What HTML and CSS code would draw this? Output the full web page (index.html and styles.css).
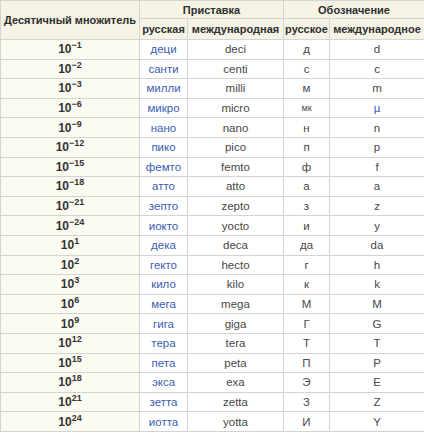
FILE: index.html
```html
<!DOCTYPE html>
<html>
<head>
    <meta charset="utf-8">
    <title>Приставки СИ</title>
    <link rel="stylesheet" href="styles.css">
</head>
<body>
    <table class="prefixes">
        <colgroup>
            <col class="c-mult">
            <col class="c-ru">
            <col class="c-int">
            <col class="c-sru">
            <col class="c-sint">
        </colgroup>
        <thead>
            <tr class="head-top">
                <th rowspan="2">Десятичный множитель</th>
                <th colspan="2">Приставка</th>
                <th colspan="2">Обозначение</th>
            </tr>
            <tr class="head-sub">
                <th>русская</th>
                <th>международная</th>
                <th>русское</th>
                <th>международное</th>
            </tr>
        </thead>
        <tbody>
            <tr><td class="mult">10<sup>−1</sup></td><td class="link">деци</td><td>deci</td><td>д</td><td>d</td></tr>
            <tr><td class="mult">10<sup>−2</sup></td><td class="link">санти</td><td>centi</td><td>с</td><td>c</td></tr>
            <tr><td class="mult">10<sup>−3</sup></td><td class="link">милли</td><td>milli</td><td>м</td><td>m</td></tr>
            <tr><td class="mult">10<sup>−6</sup></td><td class="link">микро</td><td>micro</td><td class="small">мк</td><td class="link">µ</td></tr>
            <tr><td class="mult">10<sup>−9</sup></td><td class="link">нано</td><td>nano</td><td>н</td><td>n</td></tr>
            <tr><td class="mult">10<sup>−12</sup></td><td class="link">пико</td><td>pico</td><td>п</td><td>p</td></tr>
            <tr><td class="mult">10<sup>−15</sup></td><td class="link">фемто</td><td>femto</td><td>ф</td><td>f</td></tr>
            <tr><td class="mult">10<sup>−18</sup></td><td class="link">атто</td><td>atto</td><td>а</td><td>a</td></tr>
            <tr><td class="mult">10<sup>−21</sup></td><td class="link">зепто</td><td>zepto</td><td>з</td><td>z</td></tr>
            <tr><td class="mult">10<sup>−24</sup></td><td class="link">иокто</td><td>yocto</td><td>и</td><td>y</td></tr>
            <tr><td class="mult">10<sup>1</sup></td><td class="link">дека</td><td>deca</td><td>да</td><td>da</td></tr>
            <tr><td class="mult">10<sup>2</sup></td><td class="link">гекто</td><td>hecto</td><td>г</td><td>h</td></tr>
            <tr><td class="mult">10<sup>3</sup></td><td class="link">кило</td><td>kilo</td><td>к</td><td>k</td></tr>
            <tr><td class="mult">10<sup>6</sup></td><td class="link">мега</td><td>mega</td><td>М</td><td>M</td></tr>
            <tr><td class="mult">10<sup>9</sup></td><td class="link">гига</td><td>giga</td><td>Г</td><td>G</td></tr>
            <tr><td class="mult">10<sup>12</sup></td><td class="link">тера</td><td>tera</td><td>Т</td><td>T</td></tr>
            <tr><td class="mult">10<sup>15</sup></td><td class="link">пета</td><td>peta</td><td>П</td><td>P</td></tr>
            <tr><td class="mult">10<sup>18</sup></td><td class="link">экса</td><td>exa</td><td>Э</td><td>E</td></tr>
            <tr><td class="mult">10<sup>21</sup></td><td class="link">зетта</td><td>zetta</td><td>З</td><td>Z</td></tr>
            <tr><td class="mult">10<sup>24</sup></td><td class="link">иотта</td><td>yotta</td><td>И</td><td>Y</td></tr>
        </tbody>
    </table>
</body>
</html>
```

FILE: styles.css
```css
body {
    margin: 0;
    background: white;
    font-family: "Liberation Sans", Arial, sans-serif;
    font-size: 11.5px;
    color: #474747;
}
.prefixes {
    border-collapse: collapse;
    table-layout: fixed;
    width: 424px;
}
.c-mult { width: 139px; }
.c-ru { width: 48px; }
.c-int { width: 96px; }
.c-sru { width: 46px; }
.c-sint { width: 95px; }
.prefixes th,
.prefixes td {
    border: 1px solid #d4d4d4;
    padding: 0;
    text-align: center;
    white-space: nowrap;
    line-height: 14px;
}
.prefixes th {
    background: #f5f3e5;
    font-size: 11px;
    font-weight: bold;
    color: #2e2e2e;
}
.head-top th {
    height: 17px;
}
.head-sub th {
    height: 20px;
}
.prefixes td {
    height: 18.6px;
}
.prefixes td.mult {
    background: #fcfbf2;
    font-weight: bold;
    font-size: 12px;
    color: #333;
}
.mult sup {
    font-size: 9px;
    line-height: 0;
    vertical-align: 5px;
}
.small {
    font-size: 9px;
}
.link {
    color: #3a5cb3;
}
```
